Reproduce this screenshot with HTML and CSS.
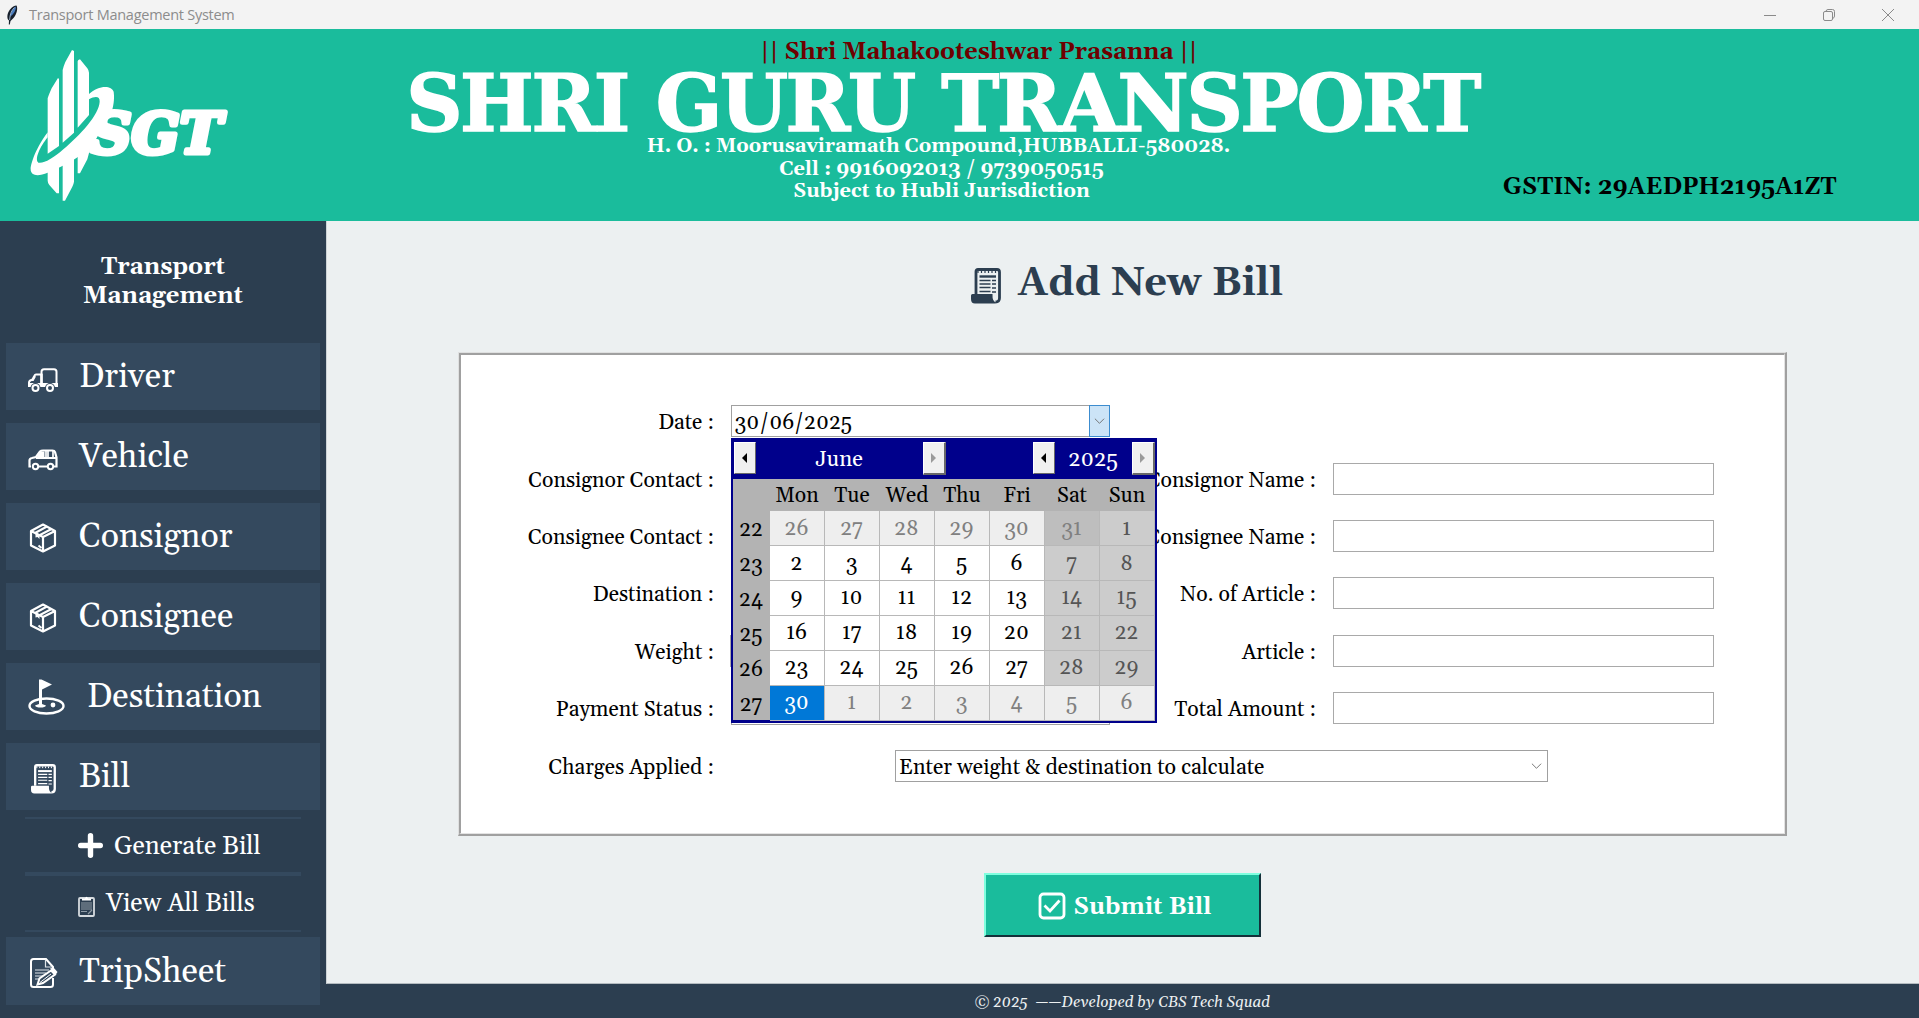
FILE: index.html
```html
<!DOCTYPE html>
<html lang="en">
<head>
<meta charset="utf-8">
<title>Transport Management System</title>
<link rel="stylesheet" href="styles.css">
</head>
<body>
<svg class="defs" width="0" height="0">
  <symbol id="box" viewBox="0 0 28 30"><path d="M14 1.500 26 8v14.500L14 28.500 2 22.500V8zM2 8l12 6 12-6M14 14v14.500" fill="none" stroke="currentColor" stroke-width="2.200" stroke-linejoin="round"/><path d="M6 10 18 3.500M10 12.500 22.500 6" stroke="currentColor" stroke-width="2"/><path d="M6.500 9.500 10.500 11.500V16L8.500 14 6.500 14.500Z" fill="currentColor"/><path d="M9.500 22.500l3 2.500" stroke="currentColor" stroke-width="2"/></symbol>
  <symbol id="scroll" viewBox="0 0 30 36"><path d="M5 26V3.500Q5 1.500 7 1.500H26Q28.500 1.500 28.500 4V30Q28.500 34 24.500 34" fill="none" stroke="currentColor" stroke-width="2.800"/><path d="M1.500 26H21.500Q21 34.500 26 34.500L24 35.500H4Q0 35.500 0 31V27.500Q0 26 1.500 26Z" fill="currentColor"/><path d="M7 3v2M10.500 3v2M14 3v2M17.500 3v2M21 3v2M24.500 3v2" stroke="currentColor" stroke-width="1.200"/><path d="M8.500 8.500H25" stroke="currentColor" stroke-width="2.400"/><path d="M8.500 12.500h11M8.500 16h11M8.500 19.500h11M8.500 23.500h11M21 12.500h4M21 16h4M21 20h4M21 24h4" stroke="currentColor" stroke-width="1.400"/></symbol>
</svg>

<header class="titlebar">
  <svg class="feather" viewBox="0 0 12 20"><path d="M10.500.5C12 3 11 9 7.500 13L4.500 16 3.800 19.500H2.800L3 15.500C.5 14 1 8 4 4.500 6 2 8.500.5 10.500.5Z" fill="#17202c"/><path d="M10 1.500C7 3 5 7 4 12 8 9 10 5 10 1.500Z" fill="#4a7dbf"/><path d="M8.500 2.500C5.500 5 4 9 3.600 15" stroke="#b7cde6" stroke-width=".8" fill="none"/></svg>
  <span class="titlebar-text">Transport Management System</span>
  <div class="window-controls">
    <svg viewBox="0 0 14 14"><path d="M1 7.500H13"/></svg>
    <svg viewBox="0 0 14 14"><rect x="1.500" y="3.500" width="9" height="9" rx="1.500"/><path d="M4 3.500Q4 1.500 6 1.500H10.500Q12.500 1.500 12.500 3.500V8Q12.500 10 10.500 10.500"/></svg>
    <svg viewBox="0 0 14 14"><path d="M1 1 13 13M13 1 1 13"/></svg>
  </div>
</header>

<section class="banner">
  <svg class="logo" viewBox="84 144 612 468" fill="#fff">
    <path d="M174 234 177 237V438L143 461V295Q146 285 155 265ZM216 150 222 153V398L188 428V210Q190 200 196 186ZM235 180 240 178 262 205Q267 212 267 218V345L233 383V184ZM143 515 177 497V580H170L148 555Q143 548 143 542ZM188 490 222 455V545Q221 552 217 560L195 602H188ZM233 455 275 430 262 478 240 520H233Z"/>
    <path d="M143 397C110 440 92 490 92 508 92 528 115 530 143 518 190 498 235 475 275 440L335 335C343 310 343 290 341 275 335 255 295 255 267 282V298C285 288 300 288 299 305 297 345 240 405 190 448 160 475 130 492 115 488 103 478 120 440 143 412Z"/>
    <text class="logo-text" x="272" y="458" textLength="394" lengthAdjust="spacingAndGlyphs">SGT</text>
  </svg>
  <div class="banner-center">
    <div class="invocation">|| Shri Mahakooteshwar Prasanna ||</div>
    <h1 class="company">SHRI GURU TRANSPORT</h1>
    <div class="address">H. O. : Moorusaviramath Compound,HUBBALLI-580028.</div>
    <div class="contact">Cell : 9916092013 / 9739050515</div>
    <div class="contact">Subject to Hubli Jurisdiction</div>
  </div>
  <div class="gstin">GSTIN: 29AEDPH2195A1ZT</div>
</section>

<div class="workspace">
  <nav class="sidebar">
    <h2 class="sidebar-title">Transport<br>Management</h2>
    <a class="nav-item"><svg class="ico" viewBox="0 0 30 24"><rect x="13.500" y="1.200" width="15" height="16" rx="2.500" fill="none" stroke="#fff" stroke-width="2"/><path d="M13.500 6V18H29V15" fill="none" stroke="#fff" stroke-width="2"/><path d="M13.500 6.500H8Q7 6.500 6.300 8L4.500 11.500Q1 12.500 1 14.500V18H13.500Z" fill="none" stroke="#fff" stroke-width="2"/><path d="M8 8.500 5.500 13H2V15H29v4H1V14L5 11.500 6.500 8Z" fill="#fff"/><circle cx="7.500" cy="20" r="5" fill="#34495e"/><circle cx="22" cy="20" r="5" fill="#34495e"/><g fill="none" stroke="#fff" stroke-width="2"><circle cx="7.500" cy="20" r="3"/><circle cx="22" cy="20" r="3"/></g></svg><span>Driver</span></a>
    <a class="nav-item"><svg class="ico" viewBox="0 0 30 24"><path d="M3 18.500H1.500V12.500Q1.500 10.500 4 10L8 9 12 3.500Q13 2.500 15 2.500H24.500Q26.500 2.500 27 4L28.500 9.500V18.500H26M11 18.500h8M8 10H28" fill="none" stroke="#fff" stroke-width="2.200"/><path d="M8.500 9.500 12.500 3.500H16.500V9.500Z" fill="#fff"/><path d="M20 3v6.500M25 3v6.500M18 3v6.500" stroke="#fff" stroke-width="1.700"/><g fill="none" stroke="#fff" stroke-width="2"><circle cx="7.500" cy="18.500" r="2.700"/><circle cx="22.500" cy="18.500" r="2.700"/></g></svg><span>Vehicle</span></a>
    <a class="nav-item"><svg class="ico ico-box"><use href="#box"/></svg><span>Consignor</span></a>
    <a class="nav-item"><svg class="ico ico-box"><use href="#box"/></svg><span>Consignee</span></a>
    <a class="nav-item"><svg class="ico ico-flag" viewBox="0 0 37 36"><ellipse cx="18.500" cy="27" rx="17" ry="7.500" fill="none" stroke="#fff" stroke-width="2.400"/><path d="M11 .5h2.500l10.500 5-10 5V25l4 1.500Q17 28.500 12.500 28.500T7 26.500l4-1.500Z" fill="#fff"/><circle cx="25" cy="26" r="2.400" fill="#fff"/></svg><span>Destination</span></a>
    <a class="nav-item"><svg class="ico ico-bill"><use href="#scroll"/></svg><span>Bill</span></a>
    <div class="submenu">
      <a class="sub-item"><svg class="ico-plus" viewBox="0 0 25 25"><path d="M12.500 2.700V22.300M2.700 12.500H22.300" stroke="#fff" stroke-width="5.400" stroke-linecap="round"/></svg><span>Generate Bill</span></a>
      <a class="sub-item sub-view"><svg class="ico-clip" viewBox="0 0 17 21"><rect x="1" y="2" width="15" height="18" rx="1" fill="none" stroke="#d5dade" stroke-width="1.800"/><path d="M4 2.500H7Q8.500-1 10 2.500h3v2H4Z" fill="#fff"/><path d="M3 7h11M3 9h11M3 11h11M3 13h11M3 15.500h6M10 18l4-4" stroke="#8f9ba6" stroke-width="1.200"/></svg><span>View All Bills</span></a>
    </div>
    <a class="nav-item"><svg class="ico ico-trip" viewBox="0 0 28 30"><path d="M23 15V9L16 1H3.500Q1 1 1 3.500V26.500Q1 29 3.500 29H20.500Q23 29 23 26.500V20" fill="none" stroke="#fff" stroke-width="2"/><path d="M15.500 1.500V9H22M5 12h14M5 15h11M5 18h9M5 21h5" stroke="#dfe5ea" stroke-width="1.200" fill="none"/><path d="M7.500 26.500 9.500 20.500 21 12.500 25 16.500 13 25Z" fill="#34495e" stroke="#fff" stroke-width="2"/><path d="M20 10.500 23.500 9.500 27.500 14 25.500 17Z" fill="#fff"/><path d="M10 24.500 21 16" stroke="#fff"/></svg><span>TripSheet</span></a>
  </nav>

  <div class="main-column">
    <main class="content">
      <h2 class="page-title"><svg class="ico-title"><use href="#scroll"/></svg><span>Add New Bill</span></h2>
      <div class="card">
        <form class="form">
          <label>Date :</label>
          <div class="combo combo-date">
            <span class="value">30/06/2025</span><span class="drop drop-active"><svg viewBox="0 0 12 8"><path d="M1 1.500 6 6.500 11 1.500"/></svg></span>
            <div class="calendar">
              <div class="cal-head">
                <i class="arrow prev"></i><span class="month">June</span><i class="arrow next"></i>
                <i class="arrow prev year-prev"></i><span class="year">2025</span><i class="arrow next"></i>
              </div>
              <div class="cal-grid">
                <b></b><b>Mon</b><b>Tue</b><b>Wed</b><b>Thu</b><b>Fri</b><b>Sat</b><b>Sun</b>
                <em>22</em><s>26</s><s>27</s><s>28</s><s>29</s><s>30</s><s class="we">31</s><u>1</u>
                <em>23</em><span>2</span><span>3</span><span>4</span><span>5</span><span>6</span><u>7</u><u>8</u>
                <em>24</em><span>9</span><span>10</span><span>11</span><span>12</span><span>13</span><u>14</u><u>15</u>
                <em>25</em><span>16</span><span>17</span><span>18</span><span>19</span><span>20</span><u>21</u><u>22</u>
                <em>26</em><span>23</span><span>24</span><span>25</span><span>26</span><span>27</span><u>28</u><u>29</u>
                <em>27</em><span class="sel">30</span><s>1</s><s>2</s><s>3</s><s>4</s><s>5</s><s>6</s>
              </div>
            </div>
          </div>
          <label class="start">Consignor Contact :</label><div class="field"></div>
          <label>Consignor Name :</label><div class="field"></div>
          <label>Consignee Contact :</label><div class="field"></div>
          <label>Consignee Name :</label><div class="field"></div>
          <label>Destination :</label><div class="field"></div>
          <label>No. of Article :</label><div class="field"></div>
          <label>Weight :</label><div class="field field-weight"></div>
          <label>Article :</label><div class="field"></div>
          <label>Payment Status :</label><div class="combo combo-payment"></div>
          <label>Total Amount :</label><div class="field"></div>
          <label>Charges Applied :</label>
          <div class="combo combo-charges"><span class="value">Enter weight &amp; destination to calculate</span><span class="drop"><svg viewBox="0 0 12 8"><path d="M1 1.500 6 6.500 11 1.500"/></svg></span></div>
        </form>
      </div>
      <button class="submit"><svg viewBox="0 0 28 28"><rect x="2" y="2" width="24" height="24" rx="3.500"/><path d="M6.500 13.500 12 19 21.500 8.500"/></svg><span>Submit Bill</span></button>
    </main>
    <footer class="footer">© 2025&nbsp; ——Developed by CBS Tech Squad</footer>
  </div>
</div>
</body>
</html>
```

FILE: styles.css
```css
* { box-sizing: border-box; }
body {
  margin: 0;
  width: 1919px;
  height: 1018px;
  overflow: hidden;
  display: flex;
  flex-direction: column;
  background: #2c3e50;
  font-family: Gelasio, Georgia, "Liberation Serif", serif;
  color: #000;
}
.defs { position: absolute; }
h1, h2 { margin: 0; }

.titlebar { flex: 0 0 29px; display: flex; align-items: center; background: #f3f3f3; padding-left: 6px; }
.feather { width: 12px; height: 20px; margin-right: 11px; }
.titlebar-text { font: 14.500px "Open Sans", "Noto Sans", sans-serif; color: #8c8c8c; letter-spacing: -.26px; }
.window-controls { margin-left: auto; display: flex; gap: 45px; padding-right: 24px; }
.window-controls svg { width: 14px; height: 14px; fill: none; stroke: #8a8a8a; }

.banner { flex: 0 0 192px; display: flex; background: #1abc9c; color: #fff; font-weight: bold; }
.logo { width: 204px; height: 156px; margin: 19px 0 0 28px; flex: none; }
.logo-text { font: italic bold 168px "DejaVu Serif", serif; stroke: #fff; stroke-width: 15px; stroke-linejoin: round; }
.banner-center { width: 1080px; margin-left: 173px; display: flex; flex-direction: column; align-items: center; white-space: nowrap; }
.invocation { font-size: 23.500px; line-height: 28px; margin: 9px 0 0 68px; color: #6e0000; }
.company { font: bold 78px/72px "DejaVu Serif", serif; letter-spacing: -2.400px; word-spacing: 3px; margin: 2px 5px -5px 0; -webkit-text-stroke: 1.500px #fff; }
.address { font-size: 19.700px; line-height: 23px; margin-right: 13px; }
.contact { font-size: 20px; line-height: 22px; margin-right: 7px; }
.gstin { font-size: 23.450px; line-height: 30px; margin: 143px 0 0 18px; color: #000; white-space: nowrap; }

.workspace { flex: 1; min-height: 0; display: flex; }
.sidebar { flex: 0 0 326px; padding: 32px 6px 0; color: #fff; }
.sidebar-title { font-size: 23.800px; line-height: 28.600px; text-align: center; height: 89.500px; }
.nav-item { display: flex; align-items: center; height: 67.500px; margin-bottom: 12.500px; padding-left: 21px; background: #34495e; font-size: 33.800px; }
.nav-item span { line-height: 40px; padding-top: 4px; }
.ico { width: 30px; height: 24px; margin: 8px 21px 0 1px; }
.ico-box { width: 28px; height: 30px; margin: 4px 22px 0 2px; }
.ico-flag { width: 37px; height: 36px; margin: 1px 22px 0 1px; }
.ico-bill { width: 25px; height: 30px; margin: 5px 23px 0 4px; }
.ico-trip { width: 28px; height: 30px; margin: 4px 21px 0 3px; }
.submenu { margin: -6px 19px 5.500px; font-size: 25.400px; }
.sub-item { display: flex; align-items: center; height: 57px; border: 2.500px solid #34495e; border-width: 2.500px 0; padding-left: 53px; }
.sub-item span { line-height: 30px; padding-top: 3px; }
.ico-plus { width: 25px; height: 25px; margin-right: 11px; }
.sub-view { height: 58px; }
.ico-clip { width: 17px; height: 21px; margin: 7px 11px 0 0; }

.main-column { flex: 1; display: flex; flex-direction: column; }
.content { flex: 0 0 763px; display: flex; flex-direction: column; align-items: center; background: #ecf0f1; border-left: 1px solid #cdd3d6; border-bottom: 1px solid #b4bbc0; }
.page-title { display: flex; align-items: center; height: 60px; margin: 33px 0 0 8px; font-size: 39.850px; line-height: 48px; color: #2c3e50; }
.ico-title { width: 30px; height: 36px; margin: 3px 17px 0 0; }
.card { width: 1329px; height: 484px; margin: 38px 1px 0 0; border: solid; border-width: 1px 2px 2px 1px; border-color: #dfe0e0 #a0a0a0 #a0a0a0 #dfe0e0; background: #fff; }
.form {
  height: 100%;
  padding: 37.500px 0 0;
  border: solid;
  border-width: 2px 1px 1px 2px;
  border-color: #a0a0a0 #e3e3e3 #e3e3e3 #a0a0a0;
  display: grid;
  grid-template-columns: 252px 379px 188px 381px;
  grid-auto-rows: 57.400px;
  column-gap: 17.500px;
  align-items: center;
  font-size: 21.200px;
}
label { text-align: right; white-space: nowrap; padding-top: 3px; margin-right: -1px; }
.start { grid-column: 1; }
.field { height: 32px; border: 1px solid #a9a9a9; background: #fff; }
.field-weight { margin-left: -1px; }
.combo { position: relative; height: 32px; border: 1px solid #a0a0a0; background: #fff; display: flex; align-items: center; padding-left: 3px; }
.value { padding-top: 2px; }
.combo-payment { height: 34px; }
.combo-charges { grid-column: 2 / 5; width: 653px; justify-self: center; margin-right: 1px; font-size: 21.350px; }
.combo-charges .value { padding-top: 3px; }
.drop { margin-left: auto; width: 21px; height: 32px; display: flex; align-items: center; justify-content: center; }
.drop svg { width: 11px; height: 8px; fill: none; stroke: #6b6b6b; }
.drop-active { background: #cce4f7; border: 1px solid #3c8ccf; margin-right: -1px; }

.calendar { position: absolute; z-index: 2; left: -1px; top: 32px; width: 426px; height: 285px; border: 2px solid #00008b; border-bottom-width: 3px; background: #b3b3b3; }
.cal-head { display: flex; align-items: center; height: 39px; background: #00008b; color: #fff; font-size: 22px; padding: 0 0 3px 1px; }
.month { flex: 0 0 167px; text-align: center; padding-top: 3px; }
.year { flex: 1; text-align: center; padding-top: 4px; }
.arrow { width: 22px; height: 32px; background: #f0f0f0; border: 1.500px solid; border-color: #fff #696969 #696969 #fff; display: flex; align-items: center; justify-content: center; }
.arrow::before { content: ""; border: 5px solid transparent; }
.prev::before { border-right-color: #000; border-left-width: 0; }
.next { width: 23px; height: 33px; border-right-width: 2px; border-bottom-width: 2px; }
.next::before { border-left-color: #9a9a9a; border-right-width: 0; }
.year-prev { margin-left: 87px; }
.cal-grid { display: grid; grid-template-columns: 37px repeat(7, 55px); grid-template-rows: 32px repeat(6, 34.900px); font-size: 21.150px; }
.cal-grid > * { display: flex; align-items: center; justify-content: center; font-weight: normal; font-style: normal; text-decoration: none; padding-top: 2px; }
.cal-grid b { padding-top: 0; }
.cal-grid span, .cal-grid u, .cal-grid s { border: solid #b8b8b8; border-width: 0 1px 1px 0; background: #fff; padding-top: 0; }
.cal-grid u { background: #ccc; color: #555; }
.cal-grid s { background: #eee; color: #808080; }
.cal-grid .we { background: #bebebe; }
.cal-grid .sel { background: #0078d7; color: #fff; }

.submit { display: flex; align-items: center; justify-content: center; width: 277px; height: 64px; margin: 37px 0 0 -1px; padding: 2px 0 0 4px; background: #1abc9c; border: 2px solid; border-color: #7fffdf #14303a #14303a #7fffdf; color: #fff; font: bold 23.800px Gelasio, Georgia, serif; }
.submit svg { width: 28px; height: 28px; margin-right: 8px; fill: none; stroke: #fff; stroke-width: 2.800px; }
.submit span { padding-top: 2px; }

.footer { flex: 1; display: flex; align-items: center; justify-content: center; padding-top: 3px; font-size: 15.400px; font-style: italic; color: #ecf0f1; }
```
